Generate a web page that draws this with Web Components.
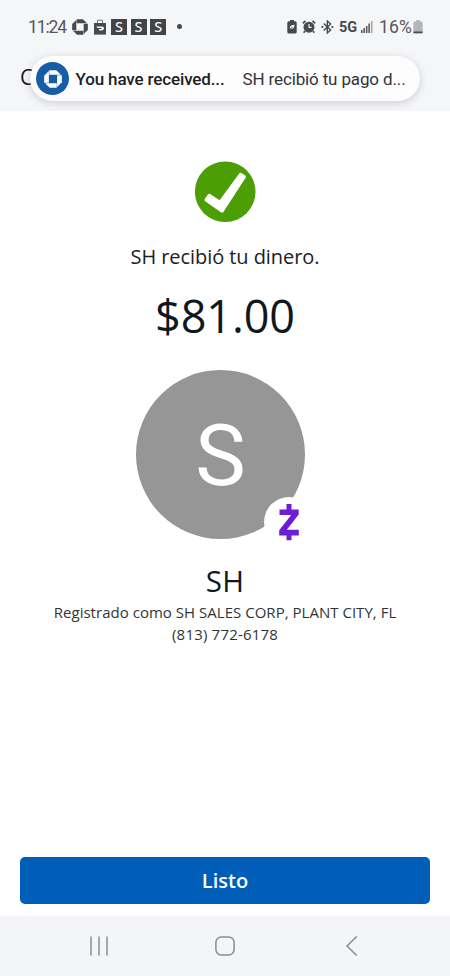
<!DOCTYPE html>
<html lang="es">
<head>
<meta charset="utf-8">
<title>Pago recibido</title>
<style>
html,body{margin:0;height:100%;background:#fff}
body{font-family:"Open Sans","Noto Sans",sans-serif;color:#1b2024;overflow:hidden}
</style>
</head>
<body>
<payment-screen></payment-screen>
<script>
const define = (name, markup, ready) => {
  const tpl = document.createElement('template');
  tpl.innerHTML = markup;
  customElements.define(name, class extends HTMLElement {
    connectedCallback() {
      if (this.shadowRoot) return;
      this.attachShadow({mode: 'open'}).append(tpl.content.cloneNode(true));
      if (ready) ready.call(this, this.shadowRoot);
    }
  });
};

/* One line of text whose letter spacing is adjusted to reach the given width. */
define('fit-text', `<style>:host{display:block;white-space:nowrap;flex:none}span{display:inline-block}</style><span><slot></slot></span>`,
  function (root) {
    const w = +this.getAttribute('w'), s = root.querySelector('span');
    const n = this.textContent.length;
    const d = (w - s.getBoundingClientRect().width) / n;
    s.style.letterSpacing = d + 'px';
    this.style.width = w + 'px';
  });

define('letter-badge', `<style>:host{display:block;width:16px;height:16px;background:#434446;color:#f5f6f8;
  font:500 14.5px/15px "Noto Sans",sans-serif;text-align:center;flex:none}</style><slot></slot>`);

define('chase-mark', `<style>:host{display:block;flex:none}svg{display:block;width:100%;height:100%}</style>
<svg viewBox="0 0 20 20" fill="currentColor">
<path d="M5.8 .2H13.6L18.8 5.4H5.8Z"/><path d="M19.8 5.8V13.6L14.6 18.8V5.8Z"/><path d="M14.2 19.8H6.4L1.2 14.6H14.2Z"/><path d="M.2 14.2V6.4L5.4 1.2V14.2Z"/></svg>`);

define('status-bar', `<style>
:host{display:flex;height:53px;align-items:center;box-sizing:border-box;padding:0 28px;color:#48494c}
svg{display:block;flex:none}
.time,.pct{font:400 17.5px/20px Roboto,sans-serif;color:#55575a}
chase-mark{width:16px;height:16px;margin-left:6px}
.bag{margin:0 5px 0 6px}
letter-badge{margin-right:3.6px}
.dot{width:5px;height:5px;border-radius:50%;background:#48494c;margin-left:7px}
.right{display:flex;align-items:center;margin-left:auto}
.net{font:700 14.5px/20px Roboto,sans-serif;padding-top:2px}
</style>
<fit-text class="time" w="38">11:24</fit-text>
<chase-mark></chase-mark>
<svg class="bag" width="12" height="16" viewBox="0 0 12 16"><path d="M3.5 4.5V1.2H8.5V4.5" fill="none" stroke="#77787a" stroke-width="1"/><path d="M0 4H12V15.6H0Z" fill="currentColor"/><path d="M2 7.4H7.6Q10.2 7.5 10 9.6Q9.8 11.5 7.5 11.5H5.8L4.4 10.1H7.3Q8 9.7 7.3 9.1H3.7Z" fill="#f5f6f8"/></svg>
<letter-badge>S</letter-badge><letter-badge>S</letter-badge><letter-badge>S</letter-badge>
<div class="dot"></div>
<div class="right">
<svg width="10" height="14" viewBox="0 0 10 14"><path d="M3 0H7V1.3H8.3Q9.7 1.3 9.7 2.8V12Q9.7 13.5 8.2 13.5H1.8Q.3 13.5.3 12V2.8Q.3 1.3 1.8 1.3H3Z" fill="currentColor"/><path d="M7.6 4.8Q4 4.8 3.1 6.6Q2.6 8 3.5 9Q7.3 9.5 7.6 4.8Z" fill="#f5f6f8"/><path d="M2.3 10.4L5.8 6.8" stroke="currentColor" stroke-width=".9"/></svg>
<svg style="margin-left:5px" width="14" height="14" viewBox="0 0 14 14"><path d="M.8 3.4L3.5.9M13.2 3.4L10.5.9M3 11L1.7 12.8M11 11L12.3 12.8" stroke="currentColor" stroke-width="1.6"/><circle cx="7" cy="7.2" r="5.5" fill="currentColor"/><path d="M7 4V7.4H9.6" stroke="#f5f6f8" stroke-width="1.1" fill="none"/></svg>
<svg style="margin-left:5px" width="13" height="14" viewBox="0 0 13 14"><path d="M2.7 3.6L9.6 10L6.3 13V1L9.6 4L2.7 10.4" stroke="currentColor" stroke-width="1.4" fill="none"/><circle cx="1.4" cy="7" r="1.1" fill="currentColor"/><circle cx="11.4" cy="7" r="1.1" fill="currentColor"/></svg>
<fit-text class="net" w="18" style="margin-left:5px">5G</fit-text>
<svg style="margin-left:4px" width="12" height="12" viewBox="0 0 12 12" fill="#5b5c5f"><path d="M0 9H1.6V12H0ZM2.4 7H4V12H2.4ZM4.9 5H6.5V12H4.9ZM7.3 2.5H8.9V12H7.3Z"/><path d="M9.9 0H11.5V12H9.9Z" fill="#a6a7aa"/></svg>
<fit-text class="pct" w="33" style="margin-left:6px">16%</fit-text>
<svg style="margin:0 -1px 0 1px" width="10" height="14" viewBox="0 0 10 14"><path d="M3 .2H7V1.6H8Q9.6 1.6 9.6 3V13.2H.4V3Q.4 1.6 2 1.6H3Z" fill="#b4b5b8"/><path d="M.4 11.6H9.6V12.4Q9.6 13.3 8.6 13.3H1.4Q.4 13.3.4 12.4Z" fill="#4b4c4f"/></svg>
</div>`);

define('push-notice', `<style>
:host{display:flex;align-items:center;box-sizing:border-box;width:390px;height:45px;margin:3px 0 0 30px;padding-left:6px;
border-radius:23px;background:#fdfdfe;box-shadow:0 2px 9px rgba(40,45,60,.2);font:400 17px/24px Roboto,sans-serif;color:#333436;position:relative}
.logo{width:33px;height:33px;border-radius:50%;background:#165ca6;color:#fff;display:grid;place-items:center;flex:none}
chase-mark{width:18px;height:18px}
.a{font-weight:500;color:#202123;margin-left:6.5px}.b{margin-left:18px}
</style>
<div class="logo"><chase-mark></chase-mark></div>
<fit-text class="a" w="149">You have received...</fit-text>
<fit-text class="b" w="163">SH recibió tu pago d...</fit-text>`);

define('top-area', `<style>
:host{display:block;height:111px;background:#f5f6f8;overflow:hidden}
.app{display:grid}
.title,push-notice{grid-area:1/1}
.title{font:400 21px/28px "Open Sans",sans-serif;padding:10px 0 0 20px;color:#15181b}
</style>
<status-bar></status-bar>
<div class="app"><div class="title">C</div><push-notice></push-notice></div>`);

define('success-mark', `<style>:host{display:block;width:61px;height:61px}svg{display:block}</style>
<svg width="61" height="61" viewBox="0 0 61 61"><circle cx="30.2" cy="30.7" r="30.3" fill="#4b9f05"/><path d="M44.2 12.4Q45.2 11.2 46.4 12L50.3 14.5Q51.5 15.4 50.6 16.8L28.4 51Q27.4 52.4 25.9 51.3L10.2 40.2Q8.9 39.2 9.9 37.7L12.9 33.6Q14 32.2 15.5 33.2L24.6 39.3Z" fill="#fff"/></svg>`);

define('contact-avatar', `<style>
:host{display:block;position:relative;width:169px;height:169px;border-radius:50%;background:#969696;color:#fff;
font:400 85px/172px Roboto,sans-serif;text-align:center}
.badge{position:absolute;left:128px;top:127px;width:50px;height:50px;border-radius:50%;background:#fff}
svg{display:block}
</style><slot></slot>
<div class="badge"><svg width="50" height="50" viewBox="0 0 50 50" fill="#6d1ed4"><path d="M15.5 12.4H34.7V17.4L22.8 32.8H34.8V38.4H15.2V33.3L27.2 18H15.5Z"/><path d="M22.5 7H27.5V13H22.5ZM22.5 38H27.5V43.2H22.5Z"/></svg></div>`);

define('primary-button', `<style>:host{display:block}
button{all:unset;display:flex;justify-content:center;align-items:center;width:100%;height:47px;border-radius:5px;background:#005eb8;color:#fff;font:600 20px/28px "Open Sans",sans-serif}</style>
<button><slot></slot></button>`);

define('system-nav', `<style>:host{display:flex;height:60px;background:#f4f5f8;align-items:center;justify-content:space-between;padding:0 89px}svg{display:block}</style>
<svg width="20" height="20" viewBox="0 0 20 20" fill="none" stroke="#8b8c90" stroke-width="1.5"><path d="M2 .5V19.5M10 .5V19.5M18 .5V19.5"/></svg>
<svg width="20" height="20" viewBox="0 0 20 20" fill="none" stroke="#8b8c90" stroke-width="1.5"><rect x=".9" y=".9" width="18.2" height="18.2" rx="5.5"/></svg>
<svg width="20" height="20" viewBox="0 0 20 20" fill="none" stroke="#8b8c90" stroke-width="1.5"><path d="M15.7.5L6 10L15.7 19.5"/></svg>`);

define('payment-screen', `<style>
:host{display:flex;flex-direction:column;height:976px;width:450px}
main{flex:1;display:flex;flex-direction:column;align-items:center;padding-top:50px}
.msg{font-size:20px;line-height:28px;margin-top:21px}
.amount{font-size:45px;line-height:60px;margin-top:15px;color:#10171d}
contact-avatar{margin:24px 9px 0 0}
.name{font-size:29.5px;line-height:36px;margin-top:24px;color:#10171d}
.line{font-size:15px;line-height:22px;color:#303438}
.reg{margin-top:2px}
.foot{padding:0 20px 12px}
</style>
<top-area></top-area>
<main>
<success-mark></success-mark>
<fit-text class="msg" w="189">SH recibió tu dinero.</fit-text>
<fit-text class="amount" w="140">$81.00</fit-text>
<contact-avatar>S</contact-avatar>
<fit-text class="name" w="38.5">SH</fit-text>
<fit-text class="line reg" w="342.5">Registrado como SH SALES CORP, PLANT CITY, FL</fit-text>
<fit-text class="line" w="106">(813) 772-6178</fit-text>
</main>
<div class="foot"><primary-button>Listo</primary-button></div>
<system-nav></system-nav>`);
</script>
</body>
</html>
